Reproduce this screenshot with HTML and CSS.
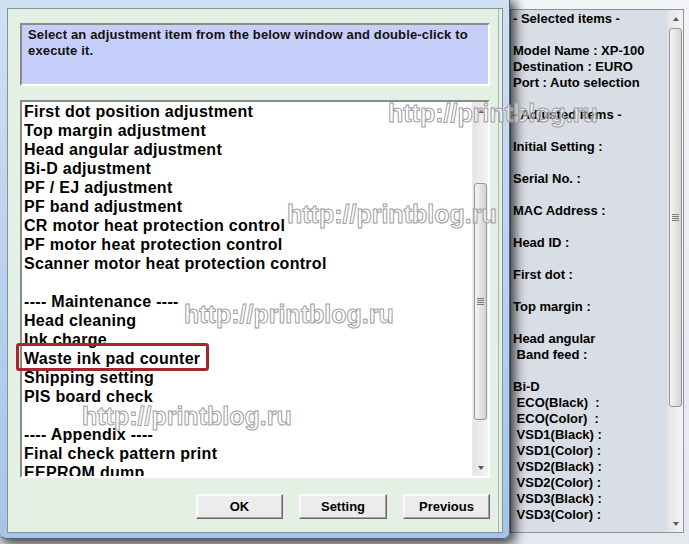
FILE: index.html
```html
<!DOCTYPE html>
<html lang="en">

<head>
    <meta charset="UTF-8">
    <meta name="viewport" content="width=device-width, initial-scale=1.0">
    <link rel="stylesheet" href="styles.css">
    <title>Adjustment Program</title>
</head>

<body>
    <div class="screen">
        <div class="dialog">
            <div class="client">
                <div class="panel">
                    <div class="hint">Select an adjustment item from the below window and double-click to execute it.</div>
                    <div class="listbox">
                        <div class="items">
                            <div class="item">First dot position adjustment</div>
                            <div class="item">Top margin adjustment</div>
                            <div class="item">Head angular adjustment</div>
                            <div class="item">Bi-D adjustment</div>
                            <div class="item">PF / EJ adjustment</div>
                            <div class="item">PF band adjustment</div>
                            <div class="item">CR motor heat protection control</div>
                            <div class="item">PF motor heat protection control</div>
                            <div class="item">Scanner motor heat protection control</div>
                            <div class="item"></div>
                            <div class="item">---- Maintenance ----</div>
                            <div class="item">Head cleaning</div>
                            <div class="item">Ink charge</div>
                            <div class="item marked">Waste ink pad counter</div>
                            <div class="item">Shipping setting</div>
                            <div class="item">PIS board check</div>
                            <div class="item"></div>
                            <div class="item">---- Appendix ----</div>
                            <div class="item">Final check pattern print</div>
                            <div class="item">EEPROM dump</div>
                        </div>
                        <div class="vscroll list-scroll">
                            <div class="arrow up"></div>
                            <div class="track">
                                <div class="thumb"><span class="grip"></span></div>
                            </div>
                            <div class="arrow down"></div>
                        </div>
                    </div>
                    <div class="actions">
                        <button class="btn btn-ok">OK</button>
                        <button class="btn btn-setting">Setting</button>
                        <button class="btn btn-prev">Previous</button>
                    </div>
                </div>
            </div>
        </div>

        <div class="side">
            <div class="summary">
                <div class="lines">
                    <div class="line">- Selected items -</div>
                    <div class="line"></div>
                    <div class="line">Model Name : XP-100</div>
                    <div class="line">Destination : EURO</div>
                    <div class="line">Port : Auto selection</div>
                    <div class="line"></div>
                    <div class="line">- Adjusted items -</div>
                    <div class="line"></div>
                    <div class="line">Initial Setting :</div>
                    <div class="line"></div>
                    <div class="line">Serial No. :</div>
                    <div class="line"></div>
                    <div class="line">MAC Address :</div>
                    <div class="line"></div>
                    <div class="line">Head ID :</div>
                    <div class="line"></div>
                    <div class="line">First dot :</div>
                    <div class="line"></div>
                    <div class="line">Top margin :</div>
                    <div class="line"></div>
                    <div class="line">Head angular</div>
                    <div class="line"> Band feed :</div>
                    <div class="line"></div>
                    <div class="line">Bi-D</div>
                    <div class="line"> ECO(Black)  :</div>
                    <div class="line"> ECO(Color)  :</div>
                    <div class="line"> VSD1(Black) :</div>
                    <div class="line"> VSD1(Color) :</div>
                    <div class="line"> VSD2(Black) :</div>
                    <div class="line"> VSD2(Color) :</div>
                    <div class="line"> VSD3(Black) :</div>
                    <div class="line"> VSD3(Color) :</div>
                </div>
                <div class="vscroll side-scroll">
                    <div class="arrow up"></div>
                    <div class="track">
                        <div class="thumb"><span class="grip"></span></div>
                    </div>
                    <div class="arrow down"></div>
                </div>
            </div>
        </div>

        <!-- watermark over the screenshot -->
        <div class="watermarks">
            <span class="mark mark-1">http://printblog.ru</span>
            <span class="mark mark-2">http://printblog.ru</span>
            <span class="mark mark-3">http://printblog.ru</span>
            <span class="mark mark-4">http://printblog.ru</span>
        </div>
    </div>
</body>

</html>
```

FILE: styles.css
```css
*,
*::before,
*::after {
    margin: 0;
    padding: 0;
    box-sizing: border-box;
}

body {
    font-family: 'Liberation Sans', Arial, sans-serif;
    background: #1f2a36;
    color: #000;
}

.screen {
    position: relative;
    display: flex;
    width: 689px;
    height: 544px;
    overflow: hidden;
    background: #e9edf3;
}

/* dialog window */

.dialog {
    position: relative;
    z-index: 1;
    flex: 0 0 510px;
    height: 539px;
    padding: 8px 6px 5px 7px;
    background: linear-gradient(#cfe0f2, #bad2ec 50%, #a7c4e6);
    border-right: 1px solid #4a6584;
    border-bottom: 1px solid #4a6584;
    border-radius: 0 0 6px 6px;
    box-shadow: 3px 3px 12px 2px rgba(0, 0, 0, 0.75);
}

.client {
    height: 100%;
    border: 1px solid #7f91a5;
    background: #e3f0e3;
    padding-right: 3px;
}

.panel {
    height: 100%;
    border-right: 1px solid #a9b5ad;
    padding: 14px 8px 0 12px;
}

.hint {
    height: 63px;
    padding: 2px 6px;
    border: 2px solid;
    border-color: #8b8b8b #fff #fff #8b8b8b;
    background: #c5cffa;
    color: #111;
    font-size: 13px;
    font-weight: bold;
    line-height: 16px;
    letter-spacing: 0.15px;
}

.listbox {
    margin-top: 14px;
    height: 378px;
    display: flex;
    border: 2px solid;
    border-color: #8b8b8b #fff #fff #8b8b8b;
    background: #fff;
}

.items {
    flex: 1;
    padding-left: 2px;
    overflow-x: visible;
    overflow-y: clip;
}

.item {
    position: relative;
    height: 19px;
    font-size: 16px;
    font-weight: bold;
    line-height: 19px;
    letter-spacing: 0.3px;
    white-space: pre;
}

.item.marked::after {
    content: '';
    position: absolute;
    left: -8px;
    top: -6px;
    width: 193px;
    height: 28px;
    border: 3px solid #a5262c;
    border-radius: 3px;
}

/* scrollbars */

.vscroll {
    width: 16px;
    display: flex;
    flex-direction: column;
    border-left: 1px solid #ececec;
    background: linear-gradient(to right, #e4e4e4, #f4f4f4);
}

.arrow {
    height: 17px;
    display: flex;
    align-items: center;
    justify-content: center;
}

.arrow::before {
    content: '';
    border-left: 3.5px solid transparent;
    border-right: 3.5px solid transparent;
}

.arrow.up::before {
    border-bottom: 4px solid #5a5a5a;
}

.arrow.down::before {
    border-top: 4px solid #5a5a5a;
}

.track {
    flex: 1;
}

.thumb {
    margin: 0 1px;
    display: flex;
    align-items: center;
    justify-content: center;
    border: 1px solid #979797;
    border-radius: 3px;
    background: linear-gradient(to right, #f5f5f5, #e4e4e4 50%, #d3d3d3);
}

.grip {
    width: 7px;
    height: 7px;
    background: repeating-linear-gradient(#7a7a7a 0 1px, transparent 1px 2px);
}

.list-scroll .track {
    padding-top: 64px;
}

.list-scroll .thumb {
    height: 237px;
}

.side-scroll .track {
    padding-top: 1px;
}

.side-scroll .thumb {
    height: 379px;
}

/* buttons */

.actions {
    display: flex;
    justify-content: flex-end;
    gap: 16px;
    margin-top: 16px;
}

.btn {
    width: 87px;
    height: 25px;
    font-family: inherit;
    font-size: 13px;
    font-weight: bold;
    color: #000;
    background: #ececec;
    border: 1px solid;
    border-color: #f8f8f8 #696969 #696969 #f8f8f8;
    box-shadow: inset -1px -1px 0 #a0a0a0, inset 1px 1px 0 #fff;
}

.btn-setting {
    width: 88px;
}

/* right side window */

.side {
    flex: 1;
    padding: 9px 5px 11px 0;
    background: linear-gradient(#f3f5f8, #e3e8ef);
}

.summary {
    height: 100%;
    display: flex;
    border: 1px solid #8e9298;
    background: #d9dde6;
}

.lines {
    flex: 1;
    padding: 1px 0 0 2px;
    overflow: hidden;
}

.line {
    height: 16px;
    font-size: 13px;
    font-weight: bold;
    line-height: 16px;
    white-space: pre;
}

.side-scroll {
    border-left: 1px solid #e0e0e0;
}

/* watermark */

.watermarks {
    position: absolute;
    inset: 0;
    z-index: 2;
    pointer-events: none;
}

.mark {
    position: absolute;
    font-size: 25px;
    font-weight: bold;
    line-height: 25px;
    white-space: nowrap;
    color: rgba(255, 255, 255, 0.45);
    -webkit-text-stroke: 1px #a0a0a0;
}

.mark-1 {
    left: 388px;
    top: 101px;
}

.mark-2 {
    left: 287px;
    top: 202px;
}

.mark-3 {
    left: 184px;
    top: 302px;
}

.mark-4 {
    left: 82px;
    top: 404px;
}
```
